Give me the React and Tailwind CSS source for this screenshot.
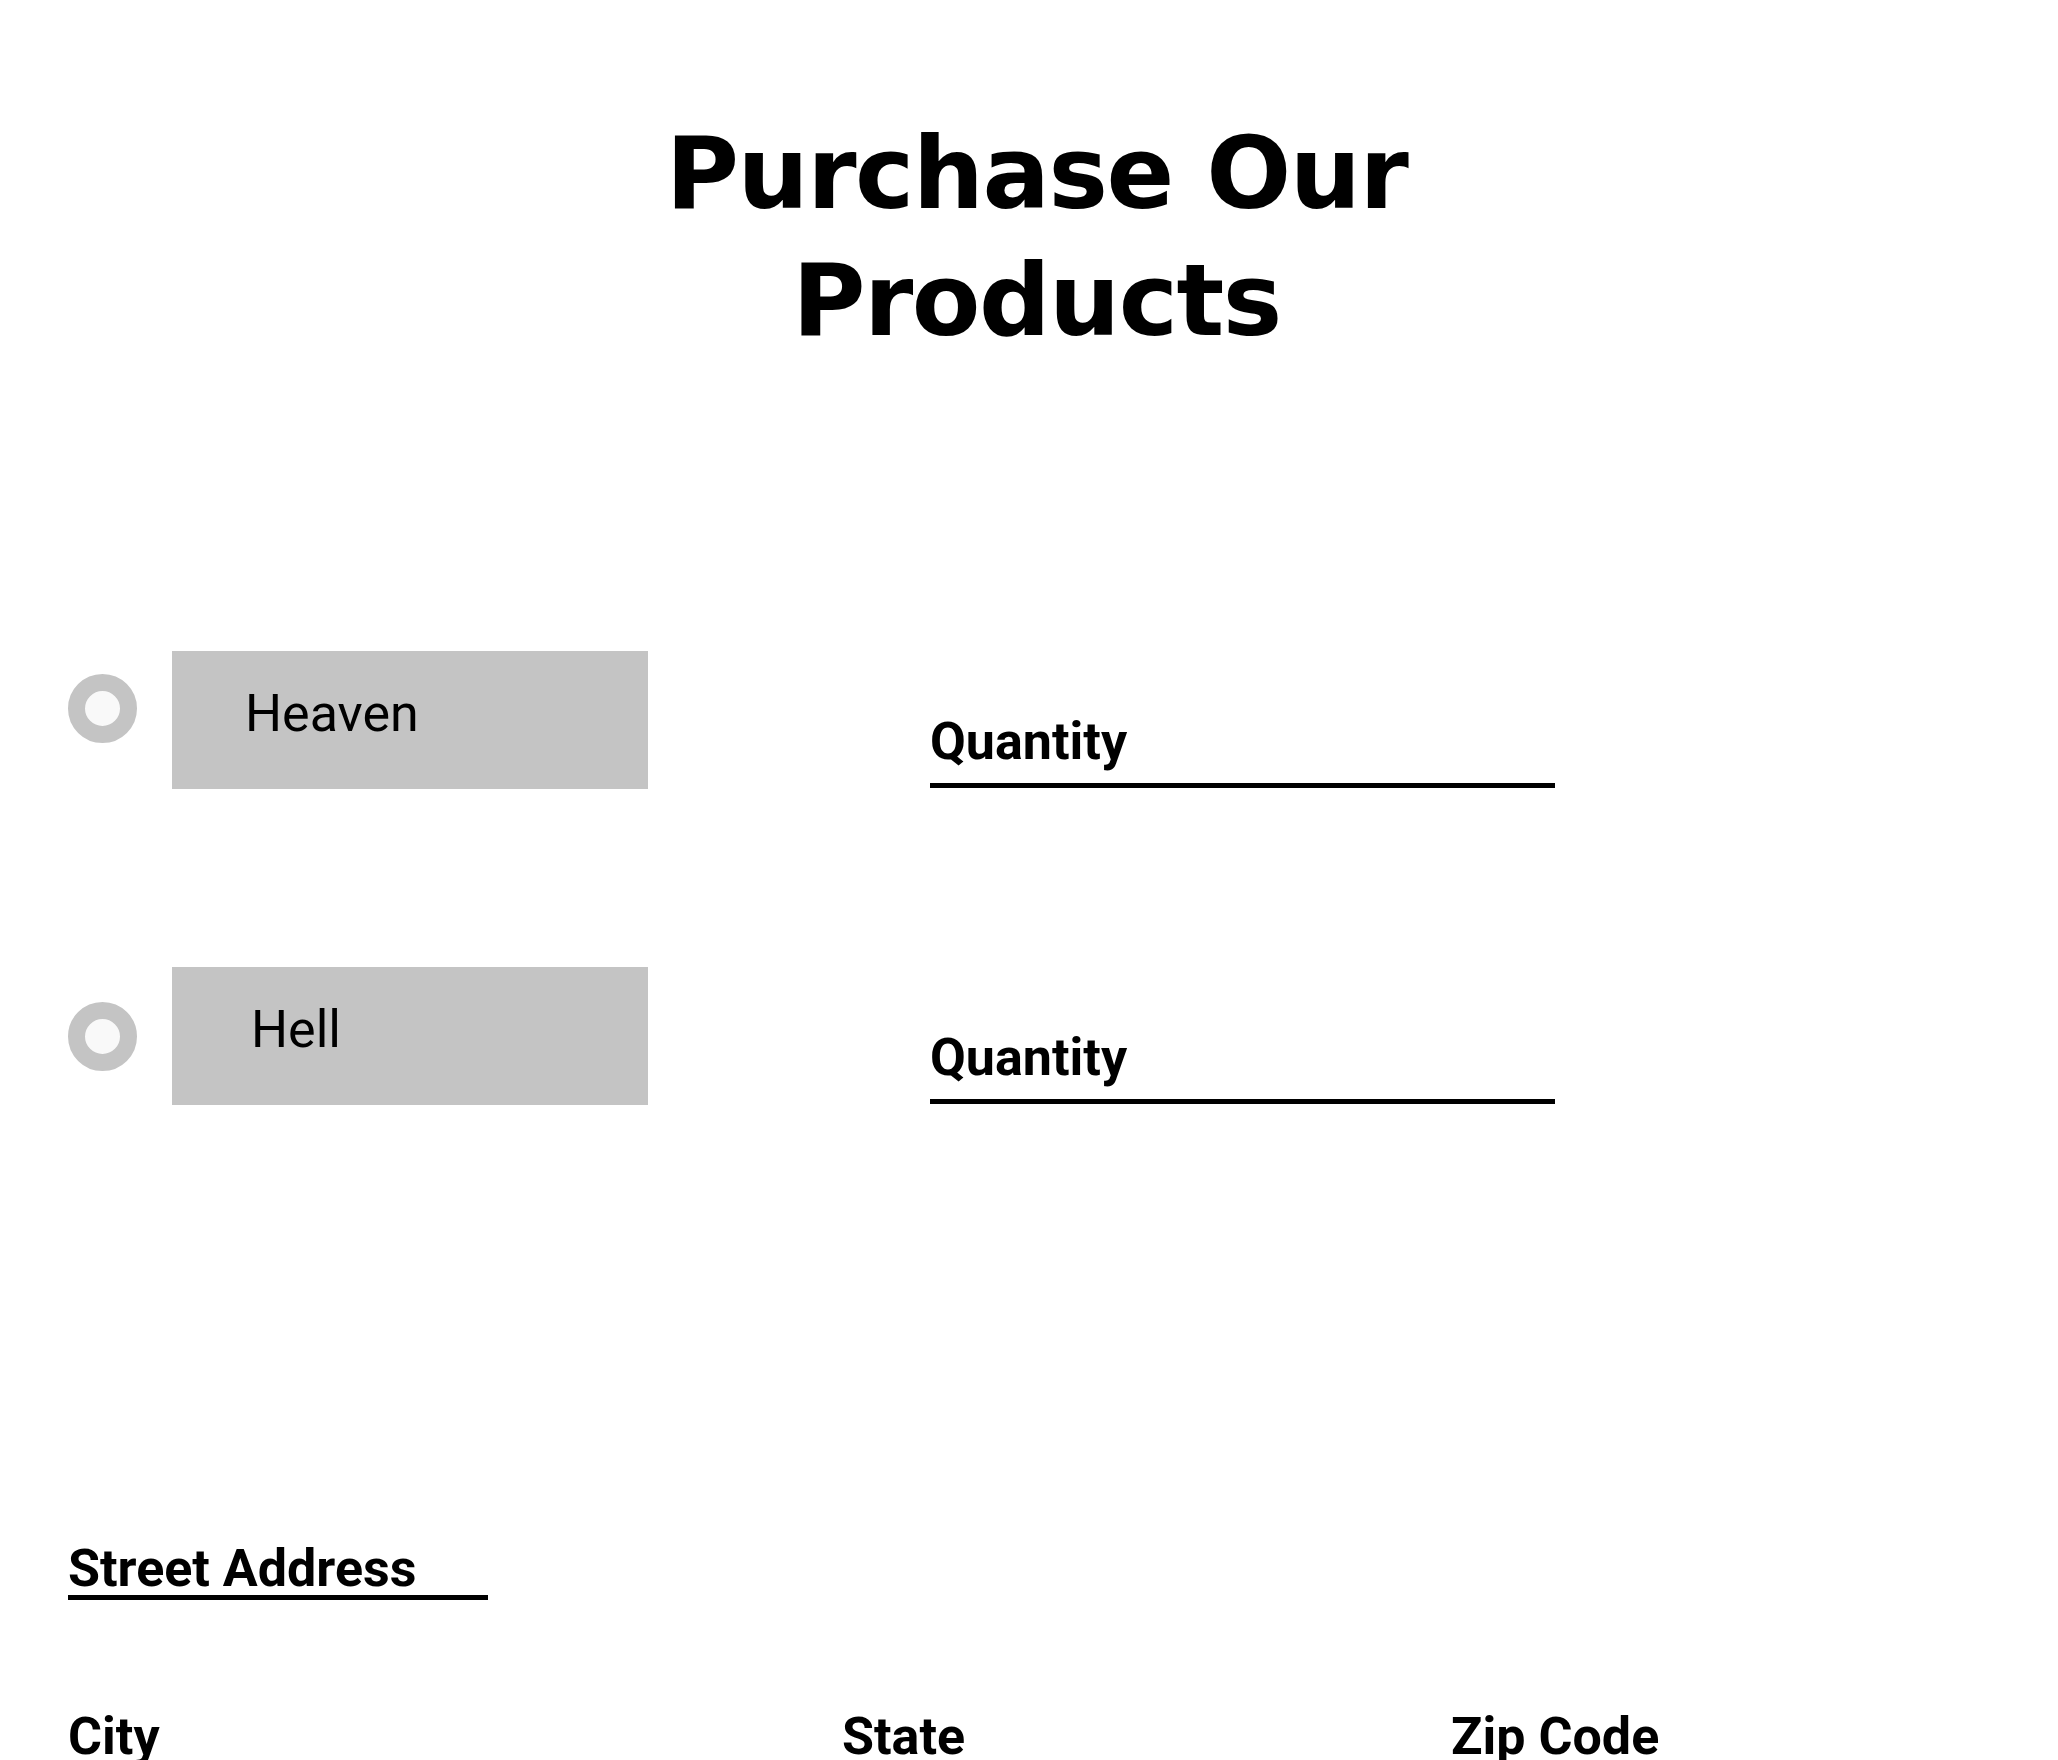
import React from 'react';

const products = [
  { name: 'Heaven', circleTop: 'mt-[23px]', textPad: 'pl-[73px]' },
  { name: 'Hell', circleTop: 'mt-[35px]', textPad: 'pl-[79px]' },
];

function ProductRow({ product, className }) {
  return (
    <div className={`flex items-start ${className}`}>
      <div
        className={`w-[69px] h-[69px] rounded-full border-[17px] border-[#c4c4c4] bg-[#f9f9f9] shrink-0 ${product.circleTop}`}
      />
      <div className={`ml-[35px] w-[476px] h-[138px] bg-[#c4c4c4] pt-[37px] ${product.textPad}`}>
        <span className="text-[52px] leading-[52px] font-normal text-black">{product.name}</span>
      </div>
      <div className="ml-[282px] mt-[65px] w-[625px] pb-[15px] border-b-[5px] border-black">
        <span className="text-[52px] leading-[52px] font-bold text-black">Quantity</span>
      </div>
    </div>
  );
}

export default function App() {
  return (
    <div className="min-h-screen bg-white font-['Roboto',sans-serif] text-black">
      <h1 className="pt-[110px] pl-[15px] text-center font-['DejaVu_Sans',sans-serif] font-bold text-[100px] leading-[127px] tracking-[-1.5px]">
        Purchase Our
        <br />
        Products
      </h1>

      <div className="pl-[68px]">
        <ProductRow product={products[0]} className="mt-[287px]" />
        <ProductRow product={products[1]} className="mt-[178px]" />

        <div className="mt-[438px] w-[420px] border-b-[5px] border-black">
          <span className="text-[52px] leading-[52px] font-bold">Street Address</span>
        </div>

        <div className="mt-[111px] flex text-[52px] leading-[52px] font-bold">
          <div className="w-[774px]">City</div>
          <div className="w-[609px]">State</div>
          <div>Zip Code</div>
        </div>
      </div>
    </div>
  );
}
